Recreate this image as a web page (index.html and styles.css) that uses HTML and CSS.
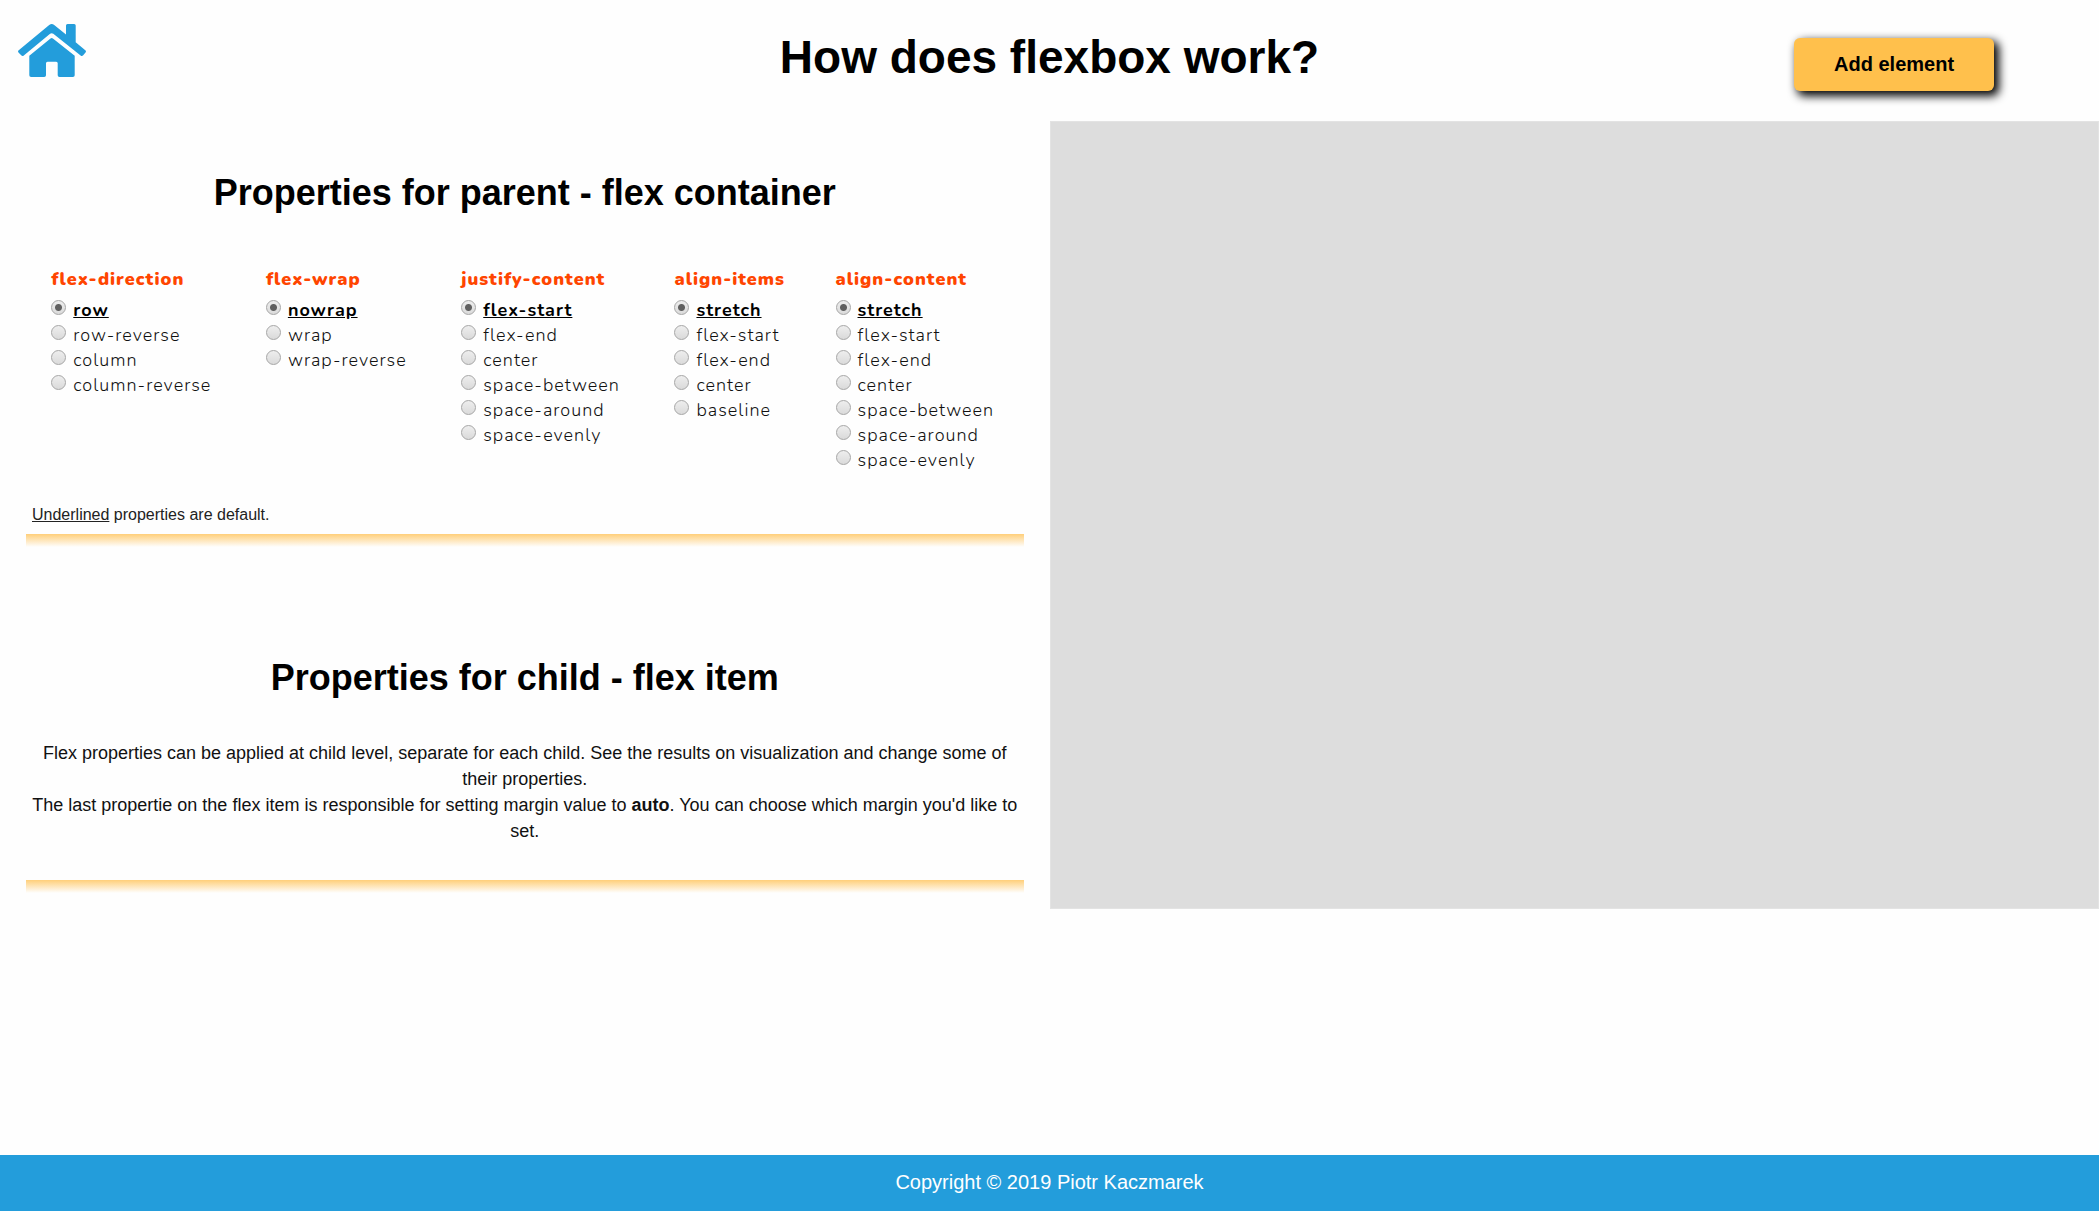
FILE: index.html
```html
<!DOCTYPE html>
<html lang="en">
<head>
  <meta charset="utf-8">
  <meta name="viewport" content="width=device-width, initial-scale=1">
  <title>How does flexbox work?</title>
  <link rel="stylesheet" href="styles.css">
</head>
<body>
  <header class="header">
    <a class="home" href="#" aria-label="Home">
      <svg class="home-icon" viewBox="0 0 68 53" width="68" height="53" aria-hidden="true">
        <path d="M31.200 1.100Q33.700-.9 36.200 1.100L48 10.500V1.500Q48 0 49.500 0H56.200Q57.700 0 57.700 1.500V18.300L67.300 26.200Q68.500 27.300 67.500 28.500L65.200 31.300Q64 32.600 62.600 31.500L35.300 9.800Q33.700 8.500 32.100 9.800L5.800 31.500Q4.400 32.600 3.200 31.300L.5 28.500Q-.5 27.300.7 26.200Z"/>
        <path d="M32.500 14.500Q33.700 13.500 34.900 14.500L56.700 31.800V51.200Q56.700 53 54.900 53H41.500Q39.700 53 39.700 51.200V39.200Q39.700 37.700 38.200 37.700H29.500Q28 37.700 28 39.200V51.200Q28 53 26.200 53H13.100Q11.300 53 11.300 51.200V31.800Z"/>
      </svg>
    </a>
    <h1 class="title">How does flexbox work?</h1>
    <button class="add-button" type="button">Add element</button>
  </header>

  <main class="main">
    <div class="properties">
      <section class="section">
        <h2 class="section-title">Properties for parent - flex container</h2>
        <form class="options">
          <fieldset class="group">
            <legend class="group-title">flex-direction</legend>
            <label class="option option-default"><input type="radio" name="direction" checked><span>row</span></label>
            <label class="option"><input type="radio" name="direction"><span>row-reverse</span></label>
            <label class="option"><input type="radio" name="direction"><span>column</span></label>
            <label class="option"><input type="radio" name="direction"><span>column-reverse</span></label>
          </fieldset>
          <fieldset class="group">
            <legend class="group-title">flex-wrap</legend>
            <label class="option option-default"><input type="radio" name="wrap" checked><span>nowrap</span></label>
            <label class="option"><input type="radio" name="wrap"><span>wrap</span></label>
            <label class="option"><input type="radio" name="wrap"><span>wrap-reverse</span></label>
          </fieldset>
          <fieldset class="group">
            <legend class="group-title">justify-content</legend>
            <label class="option option-default"><input type="radio" name="justify" checked><span>flex-start</span></label>
            <label class="option"><input type="radio" name="justify"><span>flex-end</span></label>
            <label class="option"><input type="radio" name="justify"><span>center</span></label>
            <label class="option"><input type="radio" name="justify"><span>space-between</span></label>
            <label class="option"><input type="radio" name="justify"><span>space-around</span></label>
            <label class="option"><input type="radio" name="justify"><span>space-evenly</span></label>
          </fieldset>
          <fieldset class="group">
            <legend class="group-title">align-items</legend>
            <label class="option option-default"><input type="radio" name="items" checked><span>stretch</span></label>
            <label class="option"><input type="radio" name="items"><span>flex-start</span></label>
            <label class="option"><input type="radio" name="items"><span>flex-end</span></label>
            <label class="option"><input type="radio" name="items"><span>center</span></label>
            <label class="option"><input type="radio" name="items"><span>baseline</span></label>
          </fieldset>
          <fieldset class="group">
            <legend class="group-title">align-content</legend>
            <label class="option option-default"><input type="radio" name="content" checked><span>stretch</span></label>
            <label class="option"><input type="radio" name="content"><span>flex-start</span></label>
            <label class="option"><input type="radio" name="content"><span>flex-end</span></label>
            <label class="option"><input type="radio" name="content"><span>center</span></label>
            <label class="option"><input type="radio" name="content"><span>space-between</span></label>
            <label class="option"><input type="radio" name="content"><span>space-around</span></label>
            <label class="option"><input type="radio" name="content"><span>space-evenly</span></label>
          </fieldset>
        </form>
        <p class="note"><u>Underlined</u> properties are default.</p>
      </section>

      <section class="section section-child">
        <h2 class="section-title">Properties for child - flex item</h2>
        <div class="text">
          <p>Flex properties can be applied at child level, separate for each child. See the results on visualization and change some of their properties.</p>
          <p>The last propertie on the flex item is responsible for setting margin value to <strong>auto</strong>. You can choose which margin you'd like to set.</p>
        </div>
      </section>
    </div>
    <div class="preview"></div>
  </main>

  <footer class="footer">Copyright © 2019 Piotr Kaczmarek</footer>
</body>
</html>
```
FILE: styles.css
```css
* {
  box-sizing: border-box;
  margin: 0;
  padding: 0;
}

body {
  display: flex;
  flex-direction: column;
  min-height: 100vh;
  background: #fefefe;
  color: #000;
  font-family: Arial, "Liberation Sans", sans-serif;
  font-size: 18px;
}

.header {
  display: grid;
  grid-template-columns: 1fr auto 1fr;
  align-items: start;
  min-height: 121px;
}

.home {
  justify-self: start;
  padding: 24px 18px;
}

.home-icon {
  display: block;
  fill: #239ddb;
}

.title {
  padding-top: 30px;
  font-size: 46px;
}

.add-button {
  justify-self: end;
  width: 200px;
  height: 53px;
  margin: 38px 5vw 0 0;
  padding-bottom: 1px;
  border: 0;
  border-radius: 6px;
  background: #ffc04c;
  box-shadow: 4px 4px 10px 1px #000;
  color: #000;
  font: bold 20px Arial, "Liberation Sans", sans-serif;
  cursor: pointer;
}

.main {
  display: grid;
  grid-template-columns: 1fr 1fr;
  align-items: start;
}

.properties {
  padding: 0 26px;
}

.section {
  padding-top: 51px;
}

.section::after {
  content: "";
  display: block;
  height: 13px;
  background: linear-gradient(#ffcf7a, #fefefe);
}

.section-child {
  padding-top: 110px;
}

.section-title {
  font-size: 36px;
  text-align: center;
}

.options {
  display: flex;
  flex-wrap: wrap;
  justify-content: space-around;
  margin-top: 53px;
  font-family: Nunito, Lato, sans-serif;
  font-size: 18px;
  line-height: 25px;
  letter-spacing: 1px;
}

.group {
  border: 0;
}

.group-title {
  margin-bottom: 6px;
  color: #ff4500;
  font-weight: 900;
}

.option {
  display: flex;
  gap: 7px;
  padding-right: 4px;
  color: #111;
  font-weight: 300;
}

.option-default {
  color: #000;
  font-weight: 700;
  text-decoration: underline;
}

.option input {
  appearance: none;
  width: 15px;
  height: 15px;
  margin-top: 2px;
  border: 1px solid #a6a6a6;
  border-radius: 50%;
  background: linear-gradient(#eee, #dadada);
}

.option input:checked {
  background: radial-gradient(circle, #606060 3px, transparent 4px), linear-gradient(#eee, #dadada);
}

.note {
  margin: 33px 0 10px;
  padding-left: 6px;
  color: #222;
  font-size: 16px;
}

.text {
  margin: 41px 0 36px;
  color: #111;
  line-height: 26px;
  text-align: center;
}

.preview {
  min-height: calc(65vh + 1px);
  border: 1px solid #e3e3e3;
  background: #ddd;
}

.footer {
  margin-top: auto;
  padding-bottom: 2px;
  background: #239ddb;
  color: #fff;
  font-size: 20px;
  line-height: 54px;
  text-align: center;
}
```
